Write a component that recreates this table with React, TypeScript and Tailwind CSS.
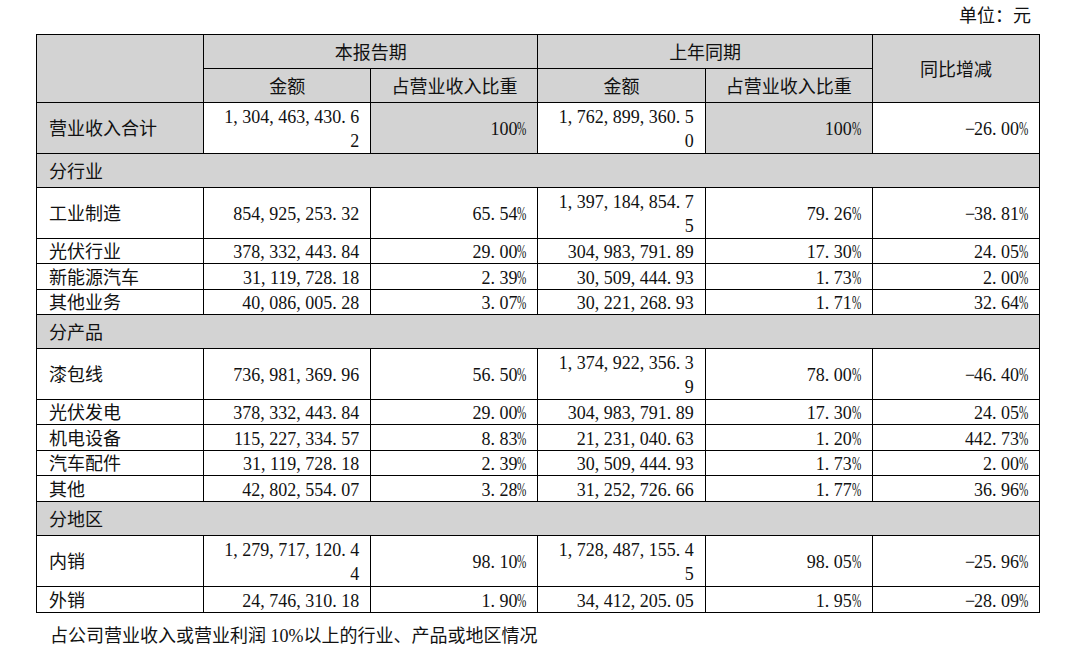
import React from 'react';

type Row =
  | { kind: 'section'; label: string }
  | { kind: 'data'; label: string; cur: string; curPct: string; prev: string; prevPct: string; yoy: string; h: string; total?: boolean };

// '|' marks where the amount wraps onto a second line in the original report
const rows: Row[] = [
  { kind: 'data', label: '营业收入合计', cur: '1,304,463,430.6|2', curPct: '100%', prev: '1,762,899,360.5|0', prevPct: '100%', yoy: '-26.00%', h: 'h-[50px]', total: true },
  { kind: 'section', label: '分行业' },
  { kind: 'data', label: '工业制造', cur: '854,925,253.32', curPct: '65.54%', prev: '1,397,184,854.7|5', prevPct: '79.26%', yoy: '-38.81%', h: 'h-[51px]' },
  { kind: 'data', label: '光伏行业', cur: '378,332,443.84', curPct: '29.00%', prev: '304,983,791.89', prevPct: '17.30%', yoy: '24.05%', h: 'h-[25px]' },
  { kind: 'data', label: '新能源汽车', cur: '31,119,728.18', curPct: '2.39%', prev: '30,509,444.93', prevPct: '1.73%', yoy: '2.00%', h: 'h-[26px]' },
  { kind: 'data', label: '其他业务', cur: '40,086,005.28', curPct: '3.07%', prev: '30,221,268.93', prevPct: '1.71%', yoy: '32.64%', h: 'h-[25px]' },
  { kind: 'section', label: '分产品' },
  { kind: 'data', label: '漆包线', cur: '736,981,369.96', curPct: '56.50%', prev: '1,374,922,356.3|9', prevPct: '78.00%', yoy: '-46.40%', h: 'h-[51px]' },
  { kind: 'data', label: '光伏发电', cur: '378,332,443.84', curPct: '29.00%', prev: '304,983,791.89', prevPct: '17.30%', yoy: '24.05%', h: 'h-[25px]' },
  { kind: 'data', label: '机电设备', cur: '115,227,334.57', curPct: '8.83%', prev: '21,231,040.63', prevPct: '1.20%', yoy: '442.73%', h: 'h-[26px]' },
  { kind: 'data', label: '汽车配件', cur: '31,119,728.18', curPct: '2.39%', prev: '30,509,444.93', prevPct: '1.73%', yoy: '2.00%', h: 'h-[25px]' },
  { kind: 'data', label: '其他', cur: '42,802,554.07', curPct: '3.28%', prev: '31,252,726.66', prevPct: '1.77%', yoy: '36.96%', h: 'h-[26px]' },
  { kind: 'section', label: '分地区' },
  { kind: 'data', label: '内销', cur: '1,279,717,120.4|4', curPct: '98.10%', prev: '1,728,487,155.4|5', prevPct: '98.05%', yoy: '-25.96%', h: 'h-[51px]' },
  { kind: 'data', label: '外销', cur: '24,746,310.18', curPct: '1.90%', prev: '34,412,205.05', prevPct: '1.95%', yoy: '-28.09%', h: 'h-[26px]' },
];

// half-width, fixed pitch figures like the report's SimSun numbers
const glyph = (c: string, i: number) => {
  if (c === ',' || c === '.') return <span key={i} className="inline-block w-[9px] text-left">{c}</span>;
  if (c === '%')
    return (
      <span key={i} className="inline-block w-[9px] text-left">
        <span className="inline-block origin-left scale-x-[0.62]">%</span>
      </span>
    );
  if (c === '-') return <span key={i} className="inline-block w-[9px] text-center">−</span>;
  return c;
};

const Num: React.FC<{ v: string }> = ({ v }) => {
  const lines = v.split('|');
  return (
    <>
      {lines.map((line, li) => (
        <div key={li} className={`whitespace-nowrap ${lines.length > 1 ? 'leading-[24px]' : ''}`}>
          {line.split('').map(glyph)}
        </div>
      ))}
    </>
  );
};

const grey = 'bg-[#d3d3d3]';
const td = 'border border-black px-[11px] pt-[2px] pb-0 align-middle leading-[22px]';

export default function App() {
  return (
    <div className="w-[1087px] h-[647px] bg-white text-[#111] text-[18px] font-['Liberation_Serif','Noto_Sans_CJK_SC',serif]">
      <div className="h-[34px] pr-[56px] pt-[4px] text-right leading-[25px]">单位：元</div>
      <table className="ml-[36px] w-[1004px] table-fixed border-collapse">
        <thead>
          <tr className="h-[34px]">
            <th rowSpan={2} className={`${td} ${grey}`} />
            <th colSpan={2} className={`${td} ${grey} font-normal text-center`}>本报告期</th>
            <th colSpan={2} className={`${td} ${grey} font-normal text-center`}>上年同期</th>
            <th rowSpan={2} className={`${td} ${grey} font-normal text-center`}>同比增减</th>
          </tr>
          <tr className="h-[34px]">
            <th className={`${td} ${grey} font-normal text-center`}>金额</th>
            <th className={`${td} ${grey} font-normal text-center`}>占营业收入比重</th>
            <th className={`${td} ${grey} font-normal text-center`}>金额</th>
            <th className={`${td} ${grey} font-normal text-center`}>占营业收入比重</th>
          </tr>
        </thead>
        <tbody>
          {rows.map((r, i) =>
            r.kind === 'section' ? (
              <tr key={i} className="h-[34px]">
                <td colSpan={6} className={`${td} ${grey} pl-[12px]`}>{r.label}</td>
              </tr>
            ) : (
              <tr key={i} className={r.h}>
                <td className={`${td} pl-[12px] ${r.total ? grey : ''}`}>{r.label}</td>
                <td className={`${td} text-right`}><Num v={r.cur} /></td>
                <td className={`${td} text-right ${r.total ? grey : ''}`}><Num v={r.curPct} /></td>
                <td className={`${td} text-right`}><Num v={r.prev} /></td>
                <td className={`${td} text-right ${r.total ? grey : ''}`}><Num v={r.prevPct} /></td>
                <td className={`${td} text-right`}><Num v={r.yoy} /></td>
              </tr>
            )
          )}
        </tbody>
      </table>
      <div className="pl-[50px] pt-[11px] leading-[25px]">占公司营业收入或营业利润 10%以上的行业、产品或地区情况</div>
    </div>
  );
}
